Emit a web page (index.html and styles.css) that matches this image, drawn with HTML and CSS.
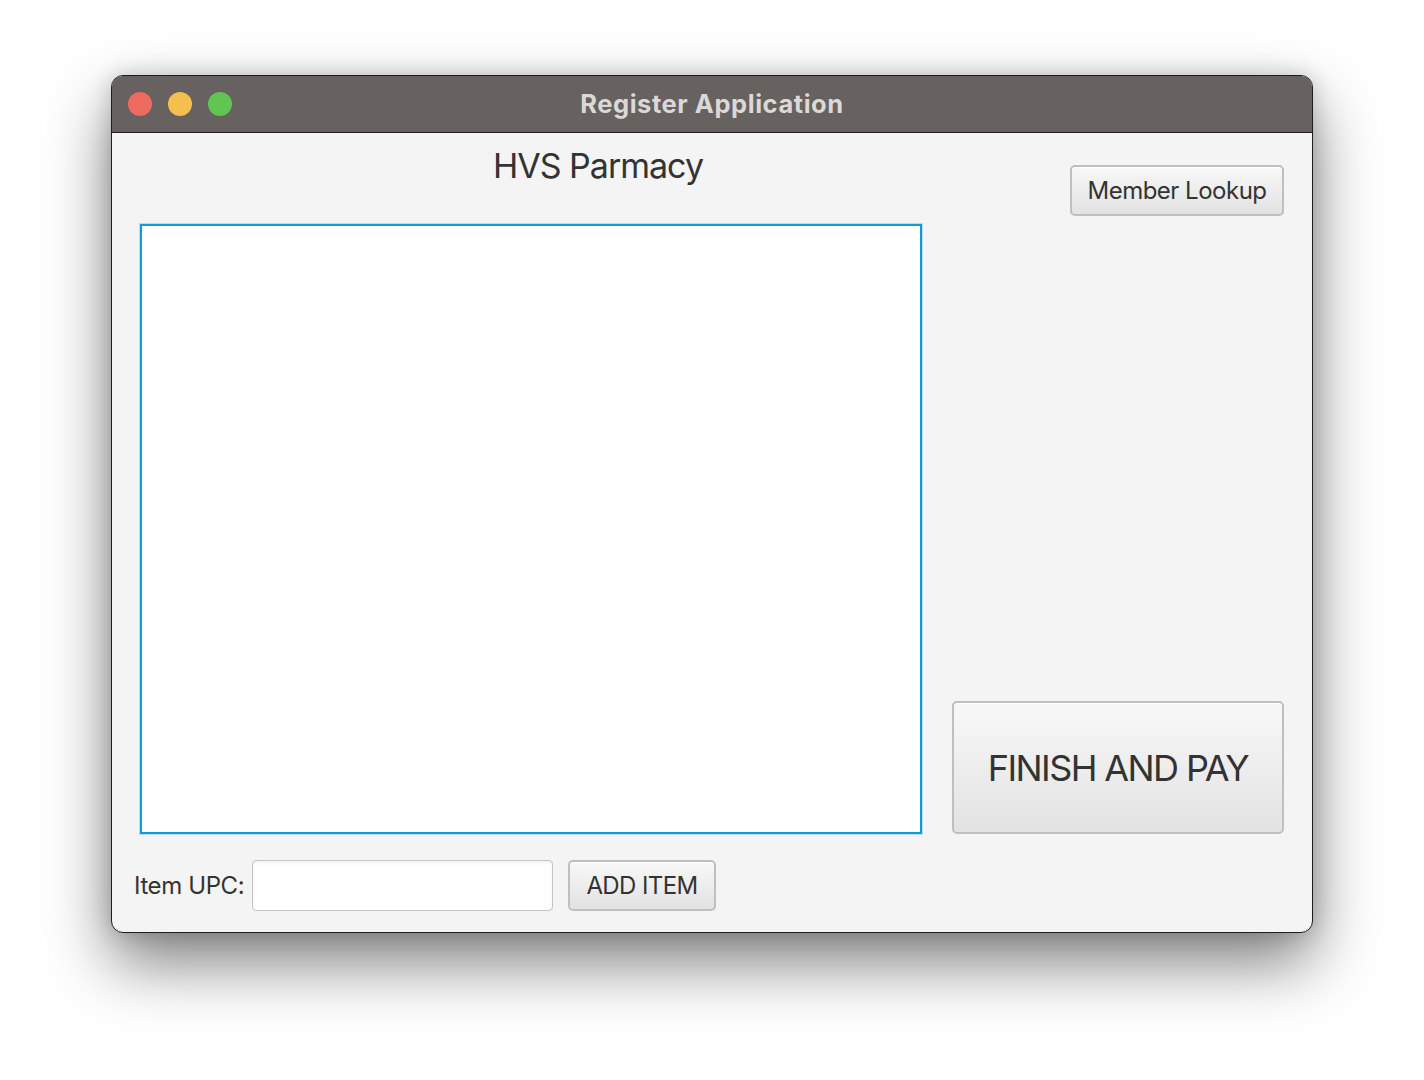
FILE: index.html
```html
<!DOCTYPE html>
<html>
<head>
<meta charset="utf-8">
<link rel="stylesheet" href="styles.css">
</head>
<body>
<div class="window">
  <div class="titlebar">
    <div class="lights">
      <span class="light red"></span>
      <span class="light yellow"></span>
      <span class="light green"></span>
    </div>
    <div class="title">Register Application</div>
  </div>
  <div class="content">
    <div class="left">
      <div class="heading-row"><h1 class="heading">HVS Parmacy</h1></div>
      <div class="list"></div>
      <div class="entry-row">
        <label class="upc-label">Item UPC:</label>
        <input class="upc-input" type="text">
        <button class="btn add-btn">ADD ITEM</button>
      </div>
    </div>
    <div class="right">
      <button class="btn member-btn">Member Lookup</button>
      <button class="btn finish-btn">FINISH AND PAY</button>
    </div>
  </div>
</div>
</body>
</html>
```
FILE: styles.css
```css
html, body {
  margin: 0;
  padding: 0;
  background: #ffffff;
}
body {
  box-sizing: border-box;
  min-height: 1080px;
  padding: 75px 0 0 111px;
  font-family: Inter, "Noto Sans", "Liberation Sans", sans-serif;
  color: #333333;
}
.window {
  width: 1200px;
  height: 856px;
  border: 1px solid #1e1e1e;
  border-radius: 12px;
  overflow: hidden;
  background: #f4f4f4;
  box-shadow: 0 30px 65px rgba(0, 0, 0, 0.5), 0 0 22px rgba(0, 0, 0, 0.18);
  display: flex;
  flex-direction: column;
}
.titlebar {
  height: 56px;
  background: #676160;
  border-bottom: 1px solid #1e1e1e;
  display: flex;
  align-items: center;
  position: relative;
  flex: none;
}
.lights {
  display: flex;
  gap: 16px;
  padding-left: 16px;
}
.light {
  width: 24px;
  height: 24px;
  border-radius: 50%;
  display: block;
}
.red { background: #ec6a5f; }
.yellow { background: #f4bf4f; }
.green { background: #61c554; }
.title {
  position: absolute;
  left: 0;
  right: 0;
  top: 12px;
  text-align: center;
  font-weight: 700;
  font-size: 25.5px;
  color: #dcd8d7;
  letter-spacing: 0.55px;
}
.content {
  flex: 1;
  display: flex;
  padding: 0 28px 0 22px;
}
.left {
  width: 788px;
  display: flex;
  flex-direction: column;
}
.heading-row {
  height: 91px;
  padding-left: 359px;
}
.heading {
  margin: 0;
  padding-top: 12px;
  font-weight: 400;
  font-size: 34px;
  letter-spacing: -1px;
  color: #333333;
}
.list {
  margin-left: 6px;
  width: 778px;
  height: 606px;
  background: #ffffff;
  border: 2px solid #0f9bd7;
  box-shadow: 0 0 0 1px rgba(140, 200, 232, 0.55);
}
.entry-row {
  margin-top: 26px;
  display: flex;
  align-items: center;
  height: 51px;
}
.upc-label {
  font-size: 24px;
  letter-spacing: -0.4px;
  color: #333333;
  width: 118px;
}
.upc-input {
  box-sizing: border-box;
  border: 1px solid #c4c4c4;
  border-radius: 4px;
  background: #ffffff;
  box-shadow: inset 0 2px 3px rgba(0, 0, 0, 0.06);
  margin: 0 15px 0 0;
  padding: 0;
  width: 301px;
  height: 51px;
}
.btn {
  font-family: Inter, "Noto Sans", "Liberation Sans", sans-serif;
  color: #333333;
  background: linear-gradient(#f8f8f8, #e2e2e2);
  border: 2px solid #bfbfbf;
  border-radius: 5px;
  padding: 0;
  box-sizing: border-box;
  box-shadow: inset 0 1px 0 #ffffff;
}
.add-btn {
  width: 148px;
  height: 51px;
  font-size: 24px;
  letter-spacing: -0.6px;
}
.right {
  flex: 1;
  display: flex;
  flex-direction: column;
  align-items: flex-end;
  justify-content: space-between;
  padding: 32px 0 98px 28px;
}
.member-btn {
  width: 214px;
  height: 51px;
  font-size: 24px;
  letter-spacing: -0.5px;
}
.finish-btn {
  width: 332px;
  height: 133px;
  font-size: 36px;
  letter-spacing: -1.6px;
}
```
